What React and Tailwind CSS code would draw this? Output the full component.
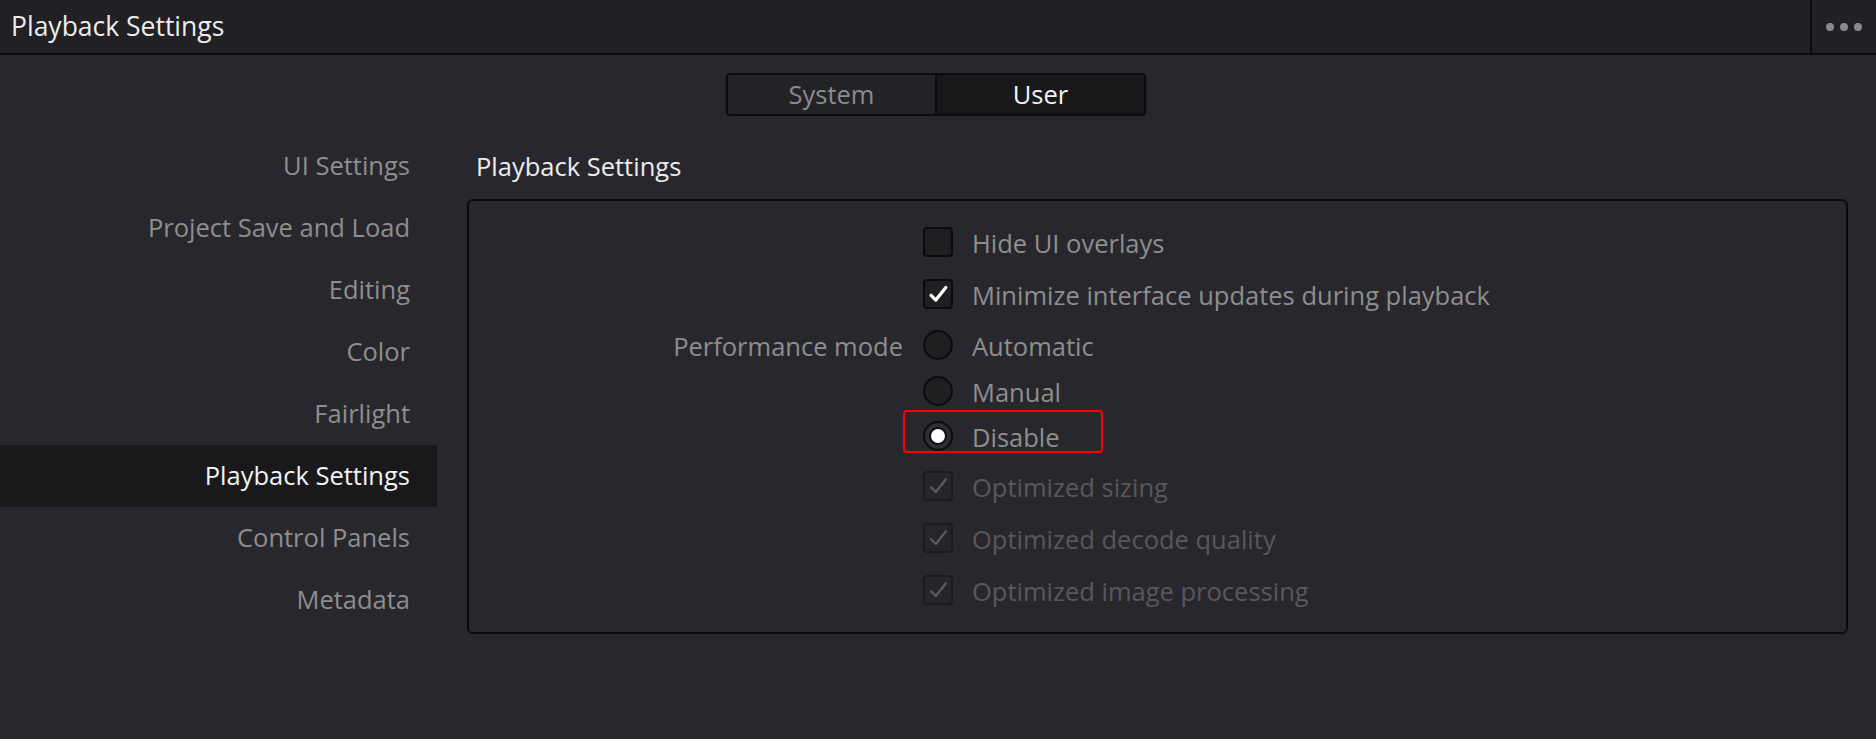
import React from 'react';

const font = { fontFamily: '"Open Sans", "Noto Sans", sans-serif' };

const sideItems = [
  'UI Settings',
  'Project Save and Load',
  'Editing',
  'Color',
  'Fairlight',
  'Playback Settings',
  'Control Panels',
  'Metadata',
];

const Check = ({ color = '#ffffff', width = 3.6 }) => (
  <svg viewBox="0 0 30 30" className="w-full h-full">
    <path d="M7 16.5 L12.5 22 L24 7.5" fill="none" stroke={color} strokeWidth={width} strokeLinecap="round" strokeLinejoin="round" />
  </svg>
);

const Checkbox = ({ checked, disabled }) => (
  <div
    className={
      disabled
        ? 'w-[30px] h-[30px] shrink-0 rounded-[4px] border-2 border-[#1b1b1e] bg-[#262529]'
        : 'w-[30px] h-[30px] shrink-0 rounded-[4px] border-2 border-[#0b0b0d] bg-[#1f1f22]'
    }
  >
    {checked && <Check color={disabled ? '#5b5b5f' : '#ffffff'} width={disabled ? 2.6 : 3.8} />}
  </div>
);

const Radio = ({ selected }) => (
  <div
    className={
      selected
        ? 'w-[30px] h-[30px] shrink-0 rounded-full border-2 border-[#0b0b0d] bg-[#2f2f33] flex items-center justify-center'
        : 'w-[30px] h-[30px] shrink-0 rounded-full border-2 border-[#0b0b0d] bg-[#1f1f22]'
    }
  >
    {selected && (
      <div className="w-[18px] h-[18px] rounded-full bg-[#0b0b0d] flex items-center justify-center">
        <div className="w-[14px] h-[14px] rounded-full bg-white"></div>
      </div>
    )}
  </div>
);

const Row = ({ h, label, children, text, disabled }) => (
  <div className={`flex items-center ${h}`}>
    <div className="w-[434px] mr-[20px] pt-[3px] text-right text-[#8e8e8e]">{label}</div>
    {children}
    <span className={`ml-[19px] pt-[3px] ${disabled ? 'text-[#58585c]' : 'text-[#8e8e8e]'}`}>{text}</span>
  </div>
);

export default function App() {
  return (
    <div className="w-full h-[739px] bg-[#28272d] flex flex-col overflow-hidden text-[25.5px] leading-none" style={font}>
      {/* Title bar */}
      <header className="h-[55px] shrink-0 flex bg-[#212024] border-b-2 border-[#0b0b0d]">
        <div className="flex-1 flex items-center pl-[11px] text-[26.5px] text-[#ececec]">Playback Settings</div>
        <div className="w-[66px] border-l-2 border-[#0b0b0d] flex items-center justify-center gap-[6px]">
          <span className="w-[8px] h-[8px] rounded-full bg-[#8a8a8c]"></span>
          <span className="w-[8px] h-[8px] rounded-full bg-[#8a8a8c]"></span>
          <span className="w-[8px] h-[8px] rounded-full bg-[#8a8a8c]"></span>
        </div>
      </header>

      {/* System / User toggle */}
      <div className="flex justify-center pt-[18px] pr-[4px]">
        <div className="w-[420px] h-[43px] flex rounded-[4px] border-2 border-[#0c0c0e] overflow-hidden">
          <div className="flex-1 flex items-center justify-center bg-[#232226] border-r-2 border-[#0c0c0e] text-[#8b8b8d]">System</div>
          <div className="flex-1 flex items-center justify-center bg-[#18181b] text-[#f2f2f2]">User</div>
        </div>
      </div>

      {/* Body */}
      <div className="flex mt-[19px]">
        <nav className="w-[437px] shrink-0 flex flex-col">
          {sideItems.map((item) => (
            <div
              key={item}
              className={
                item === 'Playback Settings'
                  ? 'h-[62px] flex items-center justify-end pr-[27px] bg-[#19191c] text-[#f2f2f2]'
                  : 'h-[62px] flex items-center justify-end pr-[27px] text-[#8e8e8e]'
              }
            >
              {item}
            </div>
          ))}
        </nav>

        <main className="flex-1 pl-[30px] pr-[28px]">
          <div className="h-[62px] flex items-center pl-[9px] pt-[2px] text-[#ececec]">Playback Settings</div>
          <div className="mt-[2px] border-2 border-[#0a0a0c] rounded-[6px] pt-[15px] pb-[16px] relative">
            <Row h="h-[52px]" text="Hide UI overlays">
              <Checkbox />
            </Row>
            <Row h="h-[52px]" text="Minimize interface updates during playback">
              <Checkbox checked />
            </Row>
            <Row h="h-[50px]" label="Performance mode" text="Automatic">
              <Radio />
            </Row>
            <Row h="h-[42px]" text="Manual">
              <Radio />
            </Row>
            <Row h="h-[48px]" text="Disable">
              <Radio selected />
            </Row>
            <Row h="h-[52px]" text="Optimized sizing" disabled>
              <Checkbox checked disabled />
            </Row>
            <Row h="h-[52px]" text="Optimized decode quality" disabled>
              <Checkbox checked disabled />
            </Row>
            <Row h="h-[52px]" text="Optimized image processing" disabled>
              <Checkbox checked disabled />
            </Row>

            {/* highlight annotation */}
            <div className="absolute left-[434px] top-[209px] w-[200px] h-[43px] border-2 border-[#ff0000] rounded-[4px] pointer-events-none"></div>
          </div>
        </main>
      </div>
    </div>
  );
}
